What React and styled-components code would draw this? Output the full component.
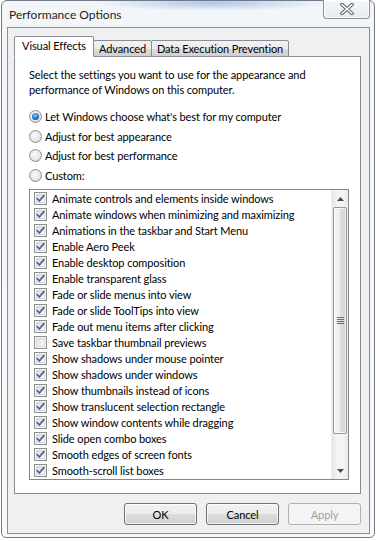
import React from 'react';
import styled, { createGlobalStyle } from 'styled-components';

const FONT = `Lato, "Noto Sans", sans-serif`;

const Global = createGlobalStyle`
  html, body { margin: 0; padding: 0; background: #ffffff; }
  body { font-family: ${FONT}; font-size: 11px; color: #000; }
  * { box-sizing: border-box; }
`;

const Window = styled.div`
  position: relative;
  width: 374px;
  height: 538px;
  margin-left: 1px;
  border: 1px solid #6f7987;
  border-radius: 6px 6px 5px 5px;
  background:
    radial-gradient(ellipse 120px 8px at 210px 2px, rgba(120,160,215,0.55), rgba(120,160,215,0) 100%),
    linear-gradient(180deg, #f3f6f9 0%, #f7f9fb 100%);
  display: flex;
  flex-direction: column;
  padding: 0 4px 3px 5px;
`;

const TitleBar = styled.div`
  height: 26px;
  display: flex;
  align-items: center;
  padding-left: 2px;
  font-size: 12px;
  color: #1e1e1e;
`;

const CloseButton = styled.div`
  position: absolute;
  top: -1px;
  right: 4px;
  width: 47px;
  height: 19px;
  border: 1px solid #8a9099;
  border-top: none;
  border-radius: 0 0 4px 4px;
  background: linear-gradient(180deg, #f4f6f8 0%, #e8ebef 100%);
  box-shadow: inset 0 0 0 1px rgba(255,255,255,0.8);
  display: flex;
  align-items: center;
  justify-content: center;
`;

const Client = styled.div`
  flex: 1;
  border: 1px solid #8a8e94;
  background: #f0f0f0;
  padding: 8px 8px 0 6px;
  display: flex;
  flex-direction: column;
  font-size: 11px;
  letter-spacing: -0.1px;
`;

const TabRow = styled.div`
  display: flex;
  align-items: flex-end;
  height: 21px;
  margin-bottom: -1px;
  position: relative;
  z-index: 2;
`;

const Tab = styled.div`
  width: ${p => p.$w}px;
  height: ${p => (p.$active ? '21px' : '17px')};
  margin-left: ${p => (p.$first ? '0' : '-1px')};
  border: 1px solid #898c95;
  border-bottom: ${p => (p.$active ? '1px solid #ffffff' : '1px solid #898c95')};
  background: ${p => (p.$active ? '#ffffff' : 'linear-gradient(180deg, #f2f2f2 0%, #ebebeb 50%, #dddddd 51%, #cfcfcf 100%)')};
  border-radius: 2px 2px 0 0;
  display: flex;
  align-items: center;
  justify-content: center;
  line-height: 1;
  white-space: nowrap;
  position: relative;
  z-index: ${p => (p.$active ? 3 : 1)};
  padding-bottom: ${p => (p.$active ? '3px' : '0')};
`;

const Panel = styled.div`
  position: relative;
  z-index: 1;
  height: 438px;
  border: 1px solid #898c95;
  background: #ffffff;
  padding: 10px 11px 0 14px;
  display: flex;
  flex-direction: column;
`;

const Description = styled.p`
  margin: 0;
  line-height: 15px;
  white-space: nowrap;
`;

const RadioGroup = styled.div`
  margin-top: 10px;
  display: flex;
  flex-direction: column;
`;

const RadioRow = styled.label`
  display: flex;
  align-items: center;
  height: 19.6px;
  gap: 3px;
`;

const RadioCircle = styled.span`
  width: 13px;
  height: 13px;
  border-radius: 50%;
  border: 1px solid #8e8f8f;
  background: radial-gradient(circle at 45% 40%, #fbfbfb 0%, #e6e6e6 55%, #c9c9c9 100%);
  display: flex;
  align-items: center;
  justify-content: center;
  &::after {
    content: '';
    display: ${p => (p.$checked ? 'block' : 'none')};
    width: 7px;
    height: 7px;
    border-radius: 50%;
    background: radial-gradient(circle at 45% 35%, #8fd0ff 0%, #2b73c6 50%, #0c3a83 100%);
  }
`;

const ListBox = styled.div`
  margin-top: 4px;
  height: 291px;
  border: 1px solid #828790;
  display: flex;
  background: #fff;
`;

const ListItems = styled.div`
  flex: 1;
  display: flex;
  flex-direction: column;
`;

const ItemRow = styled.div`
  height: 16px;
  display: flex;
  align-items: center;
  padding-left: 4px;
  gap: 5px;
  white-space: nowrap;
`;

const CheckBox = styled.span`
  width: 13px;
  height: 13px;
  flex: none;
  border: 1px solid #8e8f8f;
  background: #f4f4f4;
  display: flex;
  align-items: center;
  justify-content: center;
  position: relative;
  &::before {
    content: '';
    position: absolute;
    inset: 1px;
    border: 1px solid #d9dadc;
    background: linear-gradient(135deg, #dcdcdc 0%, #f0f0f0 60%, #fdfdfd 100%);
  }
  svg { position: relative; }
`;

const ScrollBar = styled.div`
  width: 17px;
  display: flex;
  flex-direction: column;
  background: linear-gradient(90deg, #e4e4e4 0%, #f4f4f4 30%, #f4f4f4 70%, #e8e8e8 100%);
  border-left: 1px solid #f0f0f0;
`;

const ArrowButton = styled.div`
  height: 17px;
  display: flex;
  align-items: center;
  justify-content: center;
`;

const Thumb = styled.div`
  height: 227px;
  margin: 0 1px;
  border: 1px solid #979797;
  border-radius: 2px;
  background: linear-gradient(90deg, #f5f5f5 0%, #efefef 45%, #dedede 55%, #d2d2d2 100%);
  box-shadow: inset 0 0 0 1px rgba(255,255,255,0.7);
  display: flex;
  align-items: center;
  justify-content: center;
`;

const Track = styled.div`
  flex: 1;
`;

const Grip = styled.div`
  width: 7px;
  display: flex;
  flex-direction: column;
  gap: 1px;
  span { height: 1px; background: #6b6b6b; display: block; }
`;

const ButtonRow = styled.div`
  display: flex;
  justify-content: flex-end;
  gap: 9px;
  padding-top: 9px;
`;

const DlgButton = styled.button`
  width: 73px;
  height: 22px;
  border: 1px solid ${p => (p.disabled ? '#adb2b5' : '#707070')};
  border-radius: 3px;
  font-family: ${FONT};
  font-size: 11px;
  letter-spacing: -0.1px;
  color: ${p => (p.disabled ? '#a0a0a0' : '#000')};
  background: ${p => (p.disabled ? '#f4f4f4' : 'linear-gradient(180deg, #f2f2f2 0%, #ebebeb 50%, #dddddd 51%, #cfcfcf 100%)')};
  box-shadow: inset 0 0 0 1px ${p => (p.disabled ? 'rgba(255,255,255,0)' : 'rgba(255,255,255,0.75)')};
  padding: 0;
  line-height: 1;
`;

const items = [
  ['Animate controls and elements inside windows', true],
  ['Animate windows when minimizing and maximizing', true],
  ['Animations in the taskbar and Start Menu', true],
  ['Enable Aero Peek', true],
  ['Enable desktop composition', true],
  ['Enable transparent glass', true],
  ['Fade or slide menus into view', true],
  ['Fade or slide ToolTips into view', true],
  ['Fade out menu items after clicking', true],
  ['Save taskbar thumbnail previews', false],
  ['Show shadows under mouse pointer', true],
  ['Show shadows under windows', true],
  ['Show thumbnails instead of icons', true],
  ['Show translucent selection rectangle', true],
  ['Show window contents while dragging', true],
  ['Slide open combo boxes', true],
  ['Smooth edges of screen fonts', true],
  ['Smooth-scroll list boxes', true],
];

const radios = [
  ["Let Windows choose what's best for my computer", true],
  ['Adjust for best appearance', false],
  ['Adjust for best performance', false],
  ['Custom:', false],
];

const Check = () => (
  <svg width="9" height="9" viewBox="0 0 9 9">
    <path d="M1.2 4.6 L3.4 7 L7.8 1.6" fill="none" stroke="#4b5f93" strokeWidth="1.7" strokeLinecap="round" strokeLinejoin="round" />
  </svg>
);

const CloseGlyph = () => (
  <svg width="14" height="12" viewBox="0 0 14 12">
    <path d="M2 1.5 L12 10.5 M12 1.5 L2 10.5" stroke="#5a6069" strokeWidth="3.6" strokeLinecap="round" />
    <path d="M2 1.5 L12 10.5 M12 1.5 L2 10.5" stroke="#ffffff" strokeWidth="1.6" strokeLinecap="round" />
  </svg>
);

const Arrow = ({ down }) => (
  <svg width="7" height="4" viewBox="0 0 7 4">
    <path d={down ? 'M0 0 L7 0 L3.5 4 Z' : 'M0 4 L7 4 L3.5 0 Z'} fill="#4d4d4d" />
  </svg>
);

export default function App() {
  return (
    <>
      <Global />
      <Window>
        <TitleBar>Performance Options</TitleBar>
        <CloseButton><CloseGlyph /></CloseButton>
        <Client>
          <TabRow>
            <Tab $active $first $w={80}>Visual Effects</Tab>
            <Tab $w={59}>Advanced</Tab>
            <Tab $w={138}>Data Execution Prevention</Tab>
          </TabRow>
          <Panel>
            <Description>
              Select the settings you want to use for the appearance and<br />
              performance of Windows on this computer.
            </Description>
            <RadioGroup>
              {radios.map(([label, checked]) => (
                <RadioRow key={label}>
                  <RadioCircle $checked={checked} />
                  {label}
                </RadioRow>
              ))}
            </RadioGroup>
            <ListBox>
              <ListItems>
                {items.map(([label, checked]) => (
                  <ItemRow key={label}>
                    <CheckBox>{checked && <Check />}</CheckBox>
                    {label}
                  </ItemRow>
                ))}
              </ListItems>
              <ScrollBar>
                <ArrowButton><Arrow /></ArrowButton>
                <Thumb>
                  <Grip><span /><span /><span /><span /></Grip>
                </Thumb>
                <Track />
                <ArrowButton><Arrow down /></ArrowButton>
              </ScrollBar>
            </ListBox>
          </Panel>
          <ButtonRow>
            <DlgButton>OK</DlgButton>
            <DlgButton>Cancel</DlgButton>
            <DlgButton disabled>Apply</DlgButton>
          </ButtonRow>
        </Client>
      </Window>
    </>
  );
}
